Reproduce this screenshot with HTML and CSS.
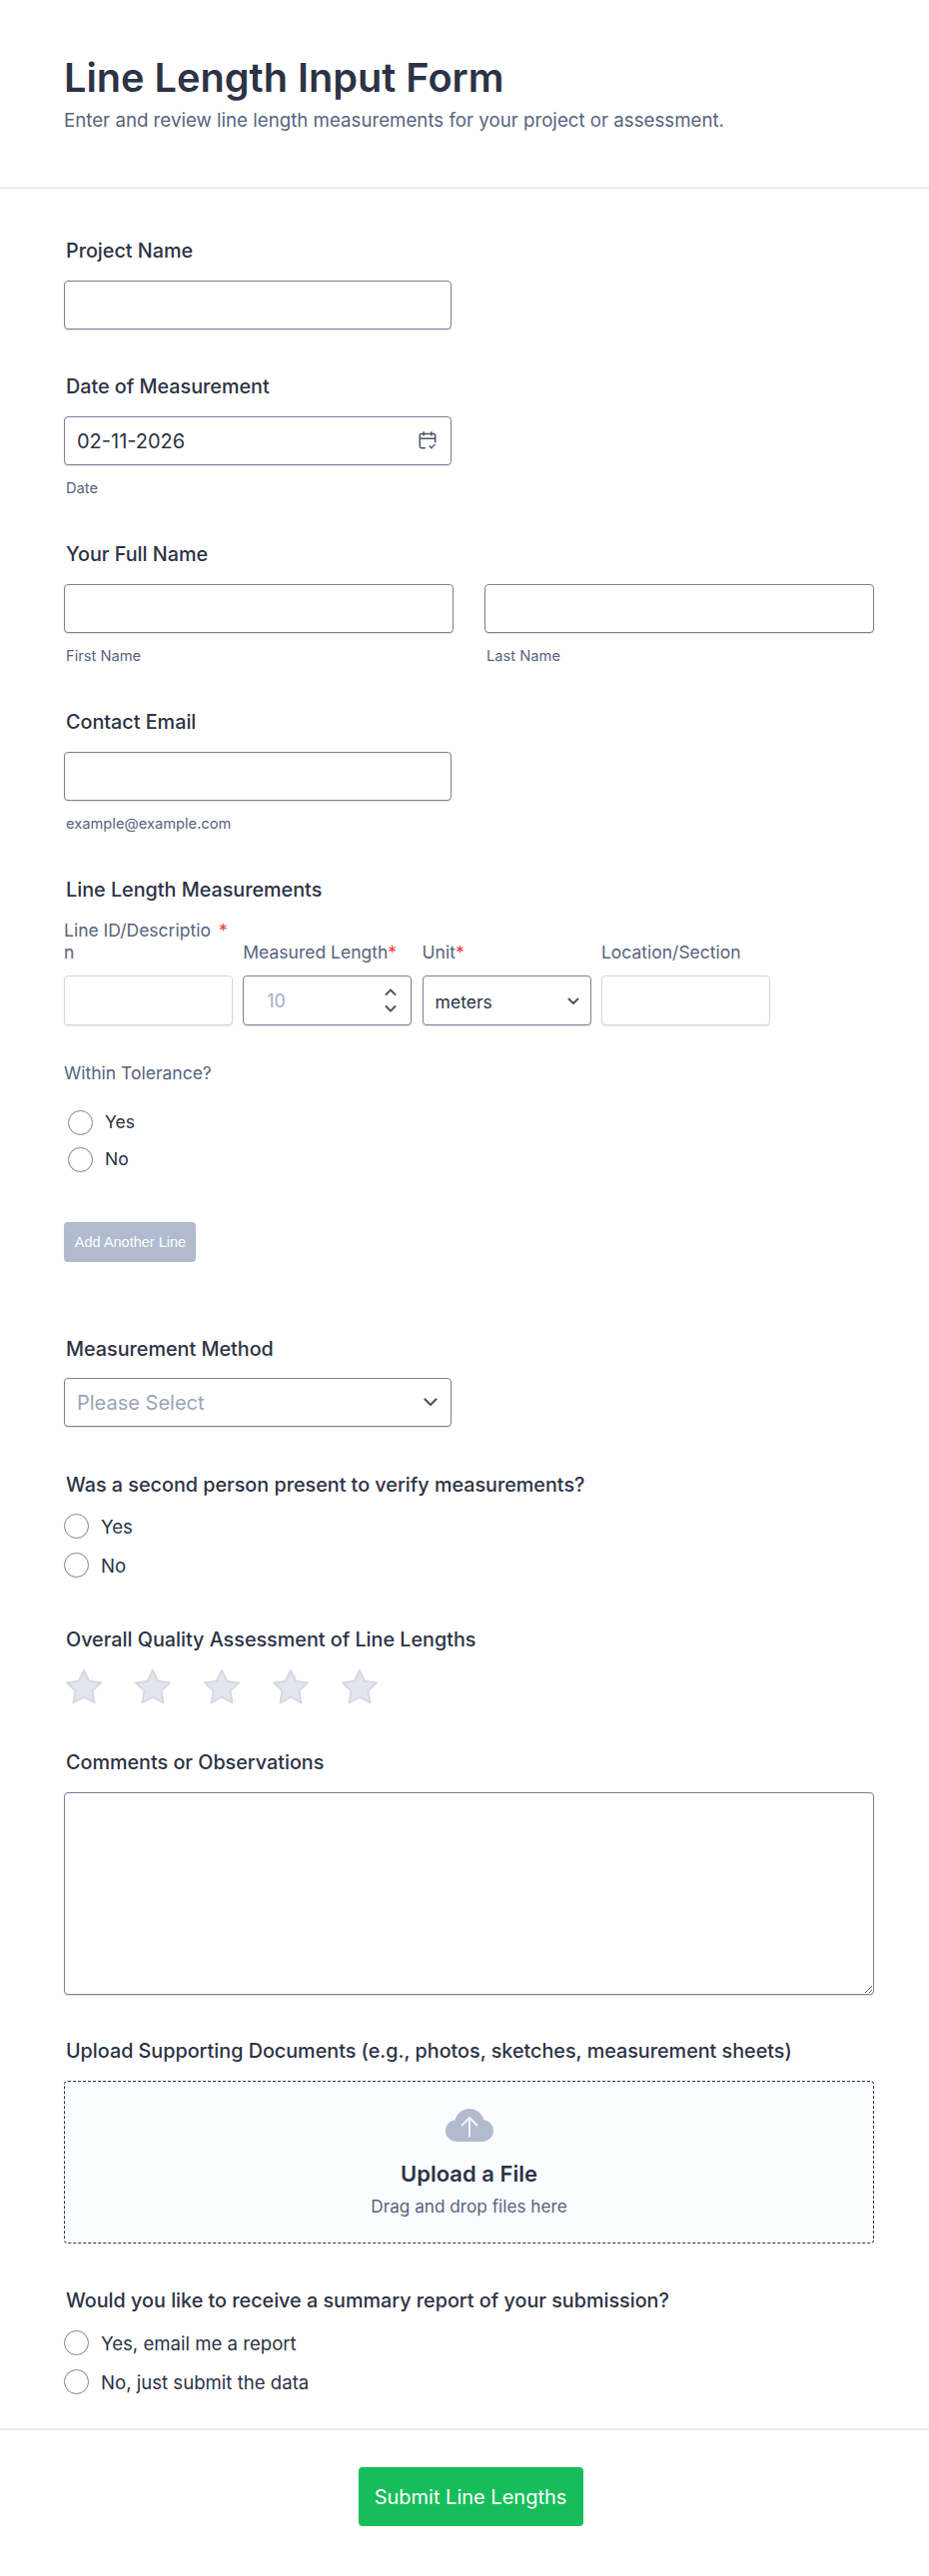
FILE: index.html
```html
<!DOCTYPE html>
<html lang="en">
<head>
  <meta charset="UTF-8">
  <meta name="viewport" content="width=device-width, initial-scale=1.0">
  <title>Line Length Input Form</title>
  <link rel="stylesheet" href="styles.css">
</head>
<body>

  <header class="form-header">
    <h1>Line Length Input Form</h1>
    <p>Enter and review line length measurements for your project or assessment.</p>
  </header>

  <form class="form-body">

    <div class="section project">
      <label class="field-label" for="project">Project Name</label>
      <input class="field" type="text" id="project">
    </div>

    <div class="section date">
      <label class="field-label" for="date">Date of Measurement</label>
      <div class="field-wrap">
        <input class="field" type="text" id="date" value="02-11-2026">
        <svg class="field-icon" width="22" height="22" viewBox="0 0 20 20" fill="none" stroke="#4b5563" stroke-width="1.4">
          <path d="M8 17H4.500A1.500 1.500 0 0 1 3 15.500V5.500A1.500 1.500 0 0 1 4.500 4h11A1.500 1.500 0 0 1 17 5.500V12"/>
          <path d="M3 8.500h14M6.500 2v4M13.500 2v4"/>
          <path d="M11.500 15l2 2 3.500-3.500" stroke-width="1.200"/>
        </svg>
      </div>
      <div class="sub-label">Date</div>
    </div>

    <div class="section name">
      <div class="field-label">Your Full Name</div>
      <div class="name-row">
        <div>
          <input class="field" type="text" aria-label="First Name">
          <div class="sub-label">First Name</div>
        </div>
        <div>
          <input class="field" type="text" aria-label="Last Name">
          <div class="sub-label">Last Name</div>
        </div>
      </div>
    </div>

    <div class="section email">
      <label class="field-label" for="email">Contact Email</label>
      <input class="field" type="text" id="email">
      <div class="sub-label">example@example.com</div>
    </div>

    <div class="section lines">
      <div class="field-label">Line Length Measurements</div>
      <div class="line-grid">
        <label class="col-label">Line ID/Descriptio<span class="star-gap">*</span><br>n</label>
        <label class="col-label">Measured Length<span class="req">*</span></label>
        <label class="col-label">Unit<span class="req">*</span></label>
        <label class="col-label">Location/Section</label>
        <input class="cell cell-light" type="text" aria-label="Line ID">
        <div class="cell cell-num">
          <span>10</span>
          <svg width="14" height="28" viewBox="0 0 14 28" fill="none" stroke="#4b5563" stroke-width="2" stroke-linecap="round" stroke-linejoin="round">
            <path d="M2.500 8L7 3.500 11.500 8M2.500 20L7 24.500 11.500 20"/>
          </svg>
        </div>
        <div class="cell cell-unit">
          <span>meters</span>
          <svg width="12" height="8" viewBox="0 0 12 8" fill="none" stroke="#4b5563" stroke-width="2" stroke-linecap="round" stroke-linejoin="round">
            <path d="M1.500 1.500L6 6l4.500-4.500"/>
          </svg>
        </div>
        <input class="cell cell-light" type="text" aria-label="Location">
      </div>

      <div class="tolerance">Within Tolerance?</div>
      <div class="small-radio"><span class="radio"></span><span>Yes</span></div>
      <div class="small-radio"><span class="radio"></span><span>No</span></div>

      <button class="add-btn" type="button">Add Another Line</button>
    </div>

    <div class="section method">
      <div class="field-label">Measurement Method</div>
      <div class="field select-field">
        <span>Please Select</span>
        <svg width="14" height="9" viewBox="0 0 14 9" fill="none" stroke="#4b5563" stroke-width="2.200" stroke-linecap="round" stroke-linejoin="round">
          <path d="M1.500 1.500L7 7l5.500-5.500"/>
        </svg>
      </div>
    </div>

    <div class="section verify">
      <div class="field-label">Was a second person present to verify measurements?</div>
      <div class="radio-row"><span class="radio"></span><span>Yes</span></div>
      <div class="radio-row"><span class="radio"></span><span>No</span></div>
    </div>

    <div class="section quality">
      <div class="field-label">Overall Quality Assessment of Line Lengths</div>
      <div class="stars">
        <svg width="38" height="36" viewBox="0 0 38 36"><path class="star" d="M19 2l5.200 10.800 11.800 1.600-8.600 8.200 2.100 11.700L19 28.600 8.500 34.300l2.100-11.700L2 14.400l11.800-1.600z"/></svg>
        <svg width="38" height="36" viewBox="0 0 38 36"><path class="star" d="M19 2l5.200 10.800 11.800 1.600-8.600 8.200 2.100 11.700L19 28.600 8.500 34.300l2.100-11.700L2 14.400l11.800-1.600z"/></svg>
        <svg width="38" height="36" viewBox="0 0 38 36"><path class="star" d="M19 2l5.200 10.800 11.800 1.600-8.600 8.200 2.100 11.700L19 28.600 8.500 34.300l2.100-11.700L2 14.400l11.800-1.600z"/></svg>
        <svg width="38" height="36" viewBox="0 0 38 36"><path class="star" d="M19 2l5.200 10.800 11.800 1.600-8.600 8.200 2.100 11.700L19 28.600 8.500 34.300l2.100-11.700L2 14.400l11.800-1.600z"/></svg>
        <svg width="38" height="36" viewBox="0 0 38 36"><path class="star" d="M19 2l5.200 10.800 11.800 1.600-8.600 8.200 2.100 11.700L19 28.600 8.500 34.300l2.100-11.700L2 14.400l11.800-1.600z"/></svg>
      </div>
    </div>

    <div class="section comments">
      <label class="field-label" for="comments">Comments or Observations</label>
      <textarea class="field" id="comments"></textarea>
    </div>

    <div class="section upload">
      <div class="field-label">Upload Supporting Documents (e.g., photos, sketches, measurement sheets)</div>
      <div class="dropzone">
        <svg width="48" height="33" viewBox="0 0 48 33">
          <path fill="#b0bbcf" d="M12 33C5 33 0 28 0 22c0-5.500 4-10 9.500-10.800C11.500 4.500 17.500 0 24 0s12.500 4.500 14.500 11.200C44 12 48 16.500 48 22c0 6-5 11-12 11z"/>
          <path fill="none" stroke="#f3f4f8" stroke-width="2" d="M24 28V10M16 17l8-8 8 8"/>
        </svg>
        <div class="upload-title">Upload a File</div>
        <div class="upload-hint">Drag and drop files here</div>
      </div>
    </div>

    <div class="section report">
      <div class="field-label">Would you like to receive a summary report of your submission?</div>
      <div class="radio-row"><span class="radio"></span><span>Yes, email me a report</span></div>
      <div class="radio-row"><span class="radio"></span><span>No, just submit the data</span></div>
    </div>

  </form>

  <footer class="form-footer">
    <button class="submit-btn" type="button">Submit Line Lengths</button>
  </footer>

</body>
</html>
```

FILE: styles.css
```css
* {
  font-family: 'Inter', sans-serif;
  box-sizing: border-box;
}

body {
  margin: 0;
  background-color: #ffffff;
  color: #2c3345;
}

/* Header */
.form-header {
  height: 189px;
  padding: 55px 64px 0;
  border-bottom: 1px solid #dadee8;
}

.form-header h1 {
  margin: 0;
  font-size: 39.700px;
  line-height: 46px;
  font-weight: 600;
  color: #2c3345;
}

.form-header p {
  margin: 8px 0 0;
  font-size: 18.700px;
  line-height: 24px;
  color: #57647e;
}

.form-body {
  padding: 0 55px 0 64px;
}

/* Spacing between sections */
.project { padding-top: 50px; }
.date { padding-top: 45px; }
.name { padding-top: 46px; }
.email { padding-top: 46px; }
.lines { padding-top: 46px; }
.method { padding-top: 75px; }
.verify { padding-top: 46px; }
.quality { padding-top: 36px; }
.comments { padding-top: 46px; }
.upload { padding-top: 44px; }
.report { padding-top: 45px; }

.field-label {
  display: block;
  height: 24px;
  margin: 0 0 18px 2px;
  font-size: 19.750px;
  line-height: 24px;
  font-weight: 450;
  color: #2c3345;
}

.field {
  display: block;
  width: 388px;
  height: 49px;
  padding: 0 12px;
  background: #ffffff;
  border: 1px solid #7b8099;
  border-radius: 4px;
  font-size: 20px;
  color: #2c3345;
  box-shadow: 0 1px 1px rgba(138, 143, 171, 0.25);
}

.field-wrap {
  position: relative;
  width: 388px;
}

.field-icon {
  position: absolute;
  top: 13px;
  right: 13px;
}

.sub-label {
  margin: 15px 0 0 2px;
  height: 16px;
  font-size: 14.700px;
  line-height: 16px;
  color: #57647e;
}

.name-row {
  display: flex;
  gap: 31px;
}

.name-row > div {
  width: 390px;
}

.name-row .field {
  width: 390px;
}

/* Measurements table */
.line-grid {
  display: grid;
  grid-template-columns: repeat(4, 169px);
  column-gap: 10.300px;
  row-gap: 12px;
  align-items: end;
}

.col-label {
  font-size: 17.500px;
  line-height: 22px;
  color: #57647e;
}

.star-gap {
  color: #f23a3c;
  margin-left: 8px;
}

.req {
  color: #f23a3c;
}

.cell {
  height: 50px;
  background: #ffffff;
  border-radius: 4px;
  font-size: 17.500px;
}

.cell-light {
  border: 1px solid #d3d6e2;
  box-shadow: 0 1px 1px rgba(160, 165, 190, 0.25);
}

.cell-num, .cell-unit {
  display: flex;
  align-items: center;
  justify-content: space-between;
  border: 1px solid #7b8099;
  box-shadow: 0 1px 1px rgba(138, 143, 171, 0.25);
}

.cell-num {
  padding: 0 13px 0 23px;
  font-size: 18px;
  color: #a4adc0;
}

.cell-unit {
  padding: 2px 11px 0 12px;
  color: #2c3345;
}

.tolerance {
  margin-top: 37px;
  font-size: 17.500px;
  line-height: 22px;
  color: #57647e;
}

.radio {
  flex: none;
  display: inline-block;
  width: 25px;
  height: 25px;
  background: #ffffff;
  border: 1px solid #7b8099;
  border-radius: 50%;
}

.small-radio {
  display: flex;
  gap: 12px;
  height: 25px;
  padding-left: 4px;
  margin-bottom: 12px;
  font-size: 17.500px;
  line-height: 24px;
  color: #2c3345;
}

.tolerance + .small-radio {
  margin-top: 26px;
}

.add-btn {
  display: block;
  width: 132px;
  height: 40px;
  margin-top: 50px;
  padding: 0 0 0 1px;
  border: none;
  border-radius: 4px;
  background-color: #b0bbcf;
  color: #ffffff;
  font-family: 'Liberation Sans', sans-serif;
  font-size: 14.500px;
}

.method .field-label {
  margin-bottom: 17px;
}

.select-field {
  display: flex;
  align-items: center;
  justify-content: space-between;
  color: #9aa4b8;
  padding-right: 13px;
}

.radio-row {
  display: flex;
  align-items: center;
  gap: 12px;
  height: 25px;
  margin-bottom: 14px;
  font-size: 18.600px;
  color: #2c3345;
}

.verify .field-label {
  margin-bottom: 17px;
}

.stars {
  display: flex;
  gap: 31px;
  margin-top: -1px;
  padding-left: 1px;
}

.star {
  fill: #e3e6ef;
  stroke: #d6d9e3;
  stroke-width: 2;
  stroke-linejoin: round;
}

textarea.field {
  width: 811px;
  height: 203px;
  padding: 12px;
}

/* File upload */
.dropzone {
  display: flex;
  flex-direction: column;
  align-items: center;
  width: 811px;
  height: 163px;
  padding-top: 27px;
  background: #fbfcff;
  border: 1px dashed #2c3345;
  border-radius: 4px;
}

.upload-title {
  margin-top: 18px;
  font-size: 22px;
  line-height: 28px;
  font-weight: 600;
  color: #2c3345;
}

.upload-hint {
  margin-top: 8px;
  font-size: 17.200px;
  line-height: 22px;
  color: #57647e;
}

/* Submit */
.form-footer {
  display: flex;
  justify-content: center;
  margin-top: 34px;
  padding: 37px 0 0 12px;
  border-top: 2px solid #e9eaf1;
}

.submit-btn {
  width: 225px;
  height: 59px;
  border: none;
  border-radius: 4px;
  background-color: #18bd5b;
  color: #ffffff;
  font-size: 20px;
  font-weight: 400;
}
```
